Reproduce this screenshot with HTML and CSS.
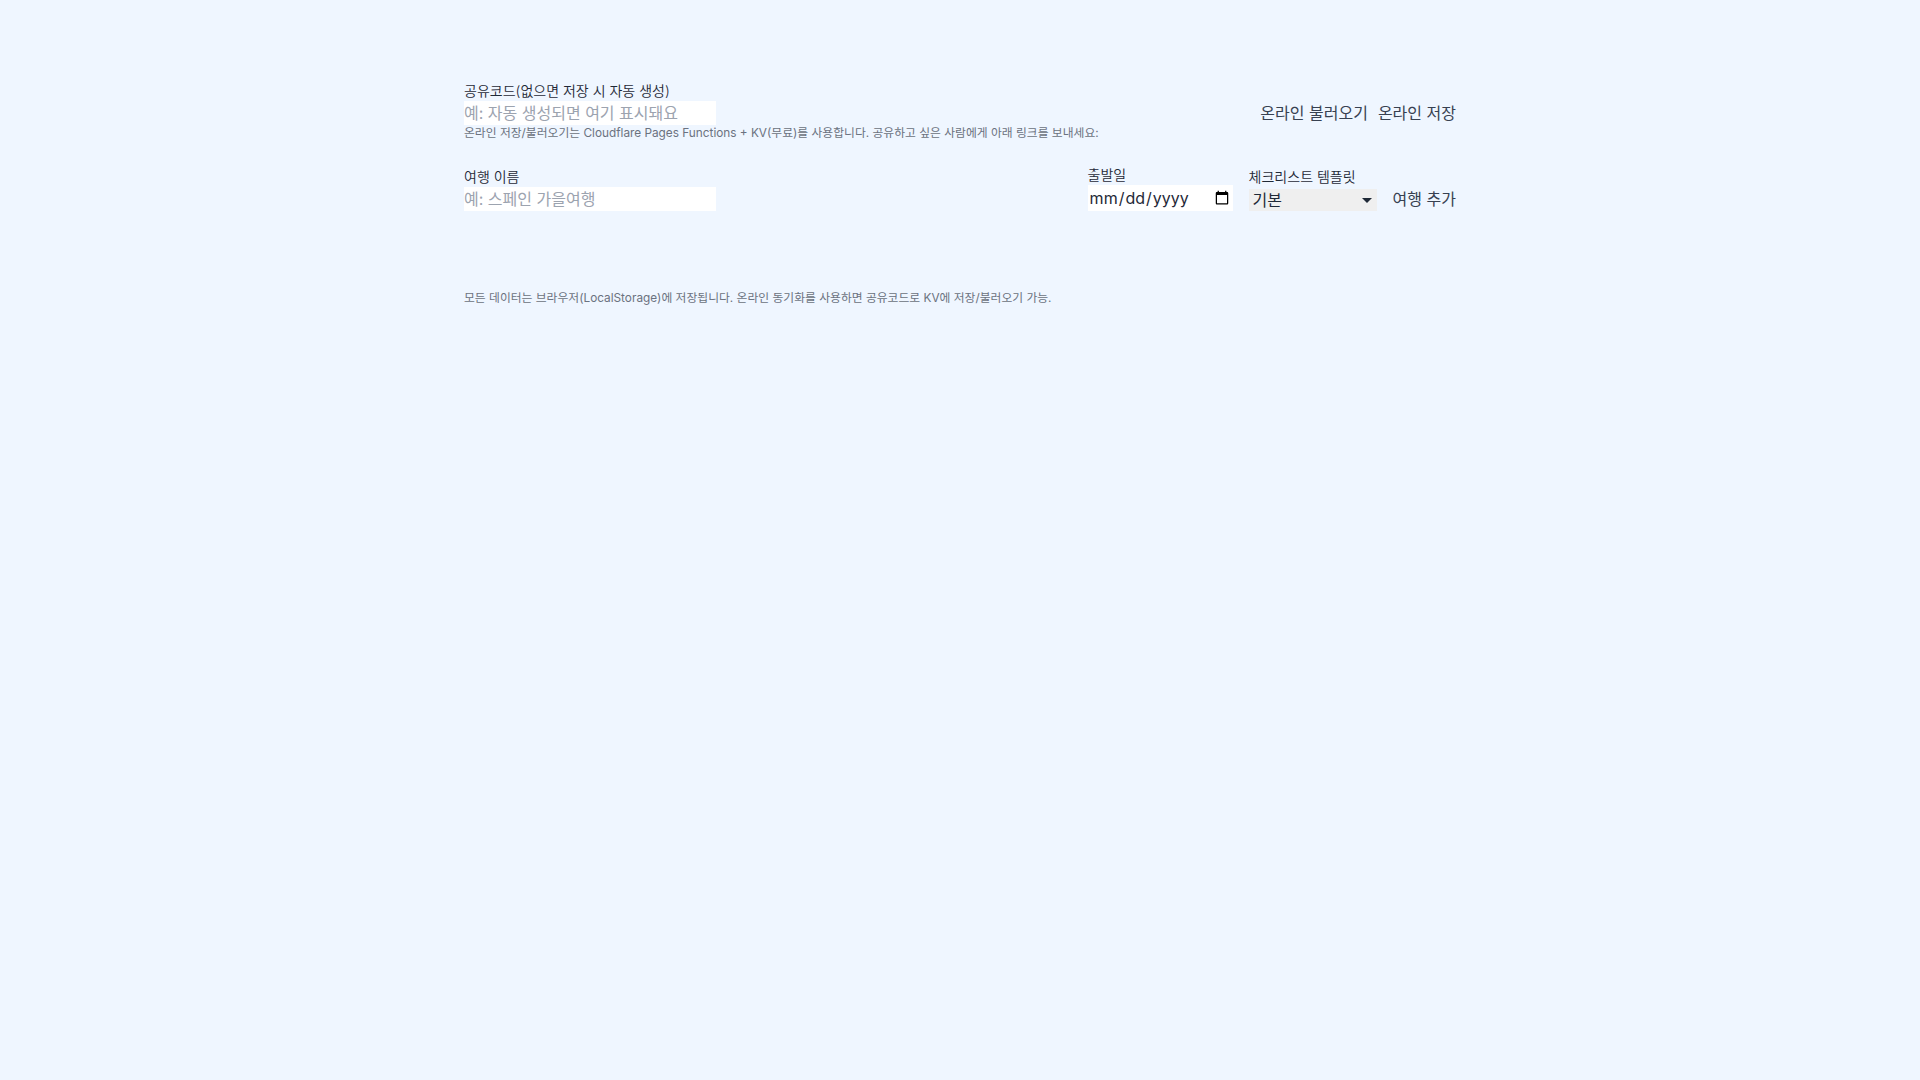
FILE: index.html
```html
<!DOCTYPE html>
<html lang="ko">
<head>
<meta charset="utf-8">
<title>여행 체크리스트</title>
<link rel="stylesheet" href="styles.css">
</head>
<body>
<main class="container">
  <section class="sync-row">
    <div class="field grow">
      <label class="label" for="code">공유코드(없으면 저장 시 자동 생성)</label>
      <input id="code" class="text-input" type="text" placeholder="예: 자동 생성되면 여기 표시돼요">
      <div class="hint">온라인 저장/불러오기는 Cloudflare Pages Functions + KV(무료)를 사용합니다. 공유하고 싶은 사람에게 아래 링크를 보내세요:</div>
    </div>
    <div class="actions">
      <button class="link-btn" type="button">온라인 불러오기</button>
      <button class="link-btn" type="button">온라인 저장</button>
    </div>
  </section>

  <section class="trip-row">
    <div class="field grow">
      <label class="label" for="name">여행 이름</label>
      <input id="name" class="text-input" type="text" placeholder="예: 스페인 가을여행">
    </div>
    <div class="field">
      <label class="label" for="date">출발일</label>
      <input id="date" class="date-input" type="date">
    </div>
    <div class="field">
      <label class="label label-select" for="tpl">체크리스트 템플릿</label>
      <span class="select-wrap">
        <select id="tpl" class="select">
          <option>기본</option>
        </select>
      </span>
    </div>
    <button class="link-btn" type="button">여행 추가</button>
  </section>

  <section class="trip-list"></section>

  <footer class="footer">모든 데이터는 브라우저(LocalStorage)에 저장됩니다. 온라인 동기화를 사용하면 공유코드로 KV에 저장/불러오기 가능.</footer>
</main>
</body>
</html>
```

FILE: styles.css
```css
html, body {
  margin: 0;
  padding: 0;
}
body {
  background: #eff6ff;
  color: #1f2937;
  font-family: Inter, "Noto Sans CJK KR", sans-serif;
}
.container {
  max-width: 992px;
  margin: 0 auto;
  padding: 81px 0 0;
}
.sync-row {
  display: flex;
  align-items: center;
  gap: 10px;
}
.trip-row {
  display: flex;
  align-items: flex-end;
  gap: 16px;
  margin-top: 23px;
}
.field {
  display: flex;
  flex-direction: column;
  align-items: flex-start;
}
.grow {
  flex: 1;
}
.label {
  font-size: 14px;
  font-weight: 350;
  line-height: 20px;
  color: #1f2937;
}
.label-select {
  padding-bottom: 2px;
}
.text-input {
  width: 252px;
  box-sizing: border-box;
  height: 24px;
  border: none;
  padding: 0;
  margin: 0;
  background: #ffffff;
  font-family: Inter, "Noto Sans CJK KR", sans-serif;
  font-size: 16px;
  color: #1f2937;
  outline: none;
}
.text-input::placeholder {
  color: #9ca3af;
}
.hint {
  font-size: 11.8px;
  line-height: 17px;
  color: #6b7280;
}
.actions {
  display: flex;
  gap: 10px;
  margin-top: 3px;
}
.link-btn {
  background: none;
  border: none;
  padding: 0;
  margin: 0;
  font-family: Inter, "Noto Sans CJK KR", sans-serif;
  font-size: 16px;
  line-height: 24px;
  color: #374151;
  cursor: pointer;
}
.date-input {
  width: 145px;
  height: 26px;
  box-sizing: border-box;
  border: none;
  padding: 0 1px;
  margin: 0;
  background: #ffffff;
  font-family: Inter, "Noto Sans CJK KR", sans-serif;
  font-size: 16px;
  color: #1f2937;
}
.select-wrap {
  position: relative;
  display: block;
}
.select-wrap::after {
  content: "";
  position: absolute;
  right: 5px;
  top: 9px;
  border-left: 5px solid transparent;
  border-right: 5px solid transparent;
  border-top: 5px solid #1f2937;
  pointer-events: none;
}
.select {
  display: block;
  width: 128px;
  height: 22px;
  box-sizing: border-box;
  border: none;
  border-radius: 0;
  margin: 0;
  padding: 0 20px 0 4px;
  -webkit-appearance: none;
  appearance: none;
  background-color: #efefef;
  font-family: Inter, "Noto Sans CJK KR", sans-serif;
  font-size: 16px;
  line-height: 22px;
  color: #1f2937;
}
.trip-list {
  min-height: 65px;
}
.footer {
  margin-top: 14px;
  font-size: 11.8px;
  line-height: 17px;
  color: #6b7280;
}
```
